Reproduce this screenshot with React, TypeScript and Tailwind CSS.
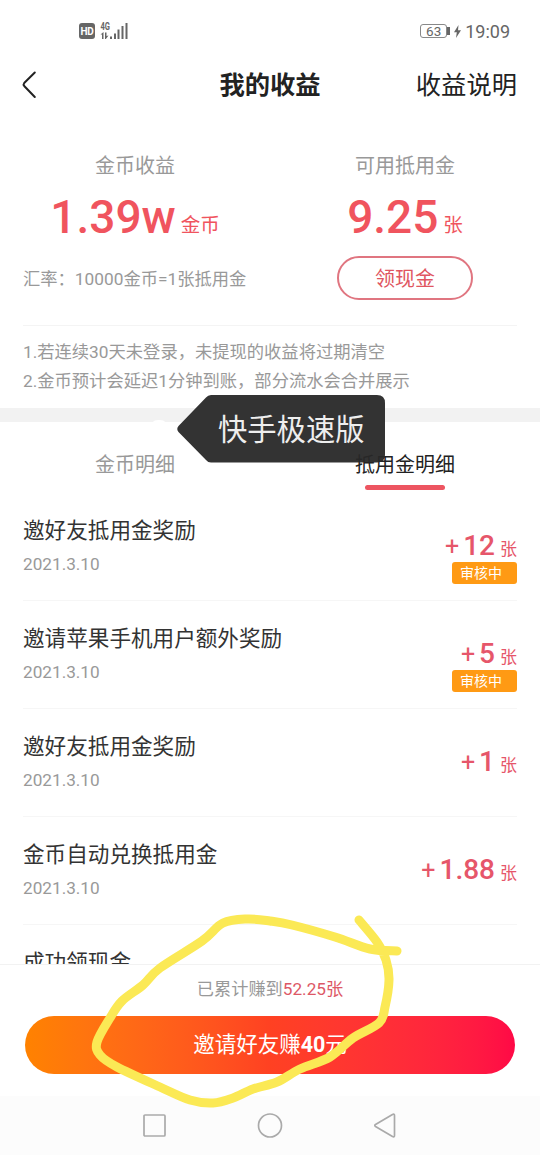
interface RewardRecord {
  title: string;
  date: string;
  amount: string;
  pending?: boolean;
}

const records: RewardRecord[] = [
  { title: "邀好友抵用金奖励", date: "2021.3.10", amount: "12", pending: true },
  { title: "邀请苹果手机用户额外奖励", date: "2021.3.10", amount: "5", pending: true },
  { title: "邀好友抵用金奖励", date: "2021.3.10", amount: "1" },
  { title: "金币自动兑换抵用金", date: "2021.3.10", amount: "1.88" },
];

const markerPoints = [
  [397, 951], [370, 949], [335, 937], [292, 925], [270, 921], [247, 919], [223, 923],
  [202, 941], [160, 968], [143, 985], [122, 1001], [110, 1018], [97, 1042], [100, 1055],
  [117, 1067], [160, 1087], [190, 1100], [213, 1103], [233, 1098], [253, 1089],
  [277, 1082], [300, 1069], [330, 1057], [353, 1038], [379, 1023], [385, 1007],
  [389, 980], [386, 960], [377, 942], [359, 920],
];

// Smooth curve through every point of the stroke
function smoothPath(points: number[][]) {
  let d = `M${points[0][0]} ${points[0][1]}`;
  for (let i = 0; i < points.length - 1; i++) {
    const p0 = points[i - 1] ?? points[i];
    const p1 = points[i];
    const p2 = points[i + 1];
    const p3 = points[i + 2] ?? p2;
    d += `C${p1[0] + (p2[0] - p0[0]) / 6} ${p1[1] + (p2[1] - p0[1]) / 6} ${p2[0] - (p3[0] - p1[0]) / 6} ${p2[1] - (p3[1] - p1[1]) / 6} ${p2[0]} ${p2[1]}`;
  }
  return d;
}

function StatusBar() {
  return (
    <div className="flex h-[60px] items-center justify-between pl-[79px] pr-[30px] pt-0.5 text-[#666]">
      <div className="flex items-center gap-[5px]">
        <span className="flex h-4 w-4 items-center justify-center rounded-[3px] bg-[#666] text-[10px] font-bold tracking-tight text-white">
          HD
        </span>
        <svg width="28" height="18" viewBox="0 0 28 18" fill="currentColor">
          <text x="0.5" y="8" fontSize="10" fontWeight="700" textLength="9.5" lengthAdjust="spacingAndGlyphs">
            4G
          </text>
          <path d="M0.500 12.500L3.500 10v7H2v-4.500zM5 10.500h1.500v3.500l2-.5-2.600 3.500H5z" />
          <path d="M10 14.500h2V17h-2zM14 11.500h2V17h-2zM17.500 7.500h2V17h-2zM21.500 4h2v13h-2zM25.500 1h2v16h-2z" />
        </svg>
      </div>
      <div className="flex items-center">
        <span className="flex h-[14px] w-[27px] items-center justify-center rounded-[3px] border border-[#888] text-[13.500px]">
          63
        </span>
        <span className="h-2 w-[3px] bg-[#666]" />
        <svg className="ml-1" width="7" height="13" viewBox="0 0 7 13" fill="currentColor">
          <path d="M4.500 0L0 7.300h2.800L2 13l5-7.800H4z" />
        </svg>
        <span className="ml-1 text-[18px]">19:09</span>
      </div>
    </div>
  );
}

function Header() {
  return (
    <header className="grid h-[50px] grid-cols-3 items-center pl-[23px] pr-[23px] pt-0.5 text-[25.300px] text-[#222]">
      <svg className="-ml-[3px] -mt-0.5" width="18" height="30" viewBox="0 0 18 30" fill="none" stroke="currentColor" strokeWidth="2" strokeLinecap="round" strokeLinejoin="round">
        <path d="M14.800 2.500L4.200 13q-1.200 1.500 0 3L14.800 27" />
      </svg>
      <h1 className="whitespace-nowrap text-center font-bold">我的收益</h1>
      <span className="whitespace-nowrap text-right">收益说明</span>
    </header>
  );
}

function Balances() {
  return (
    <section className="grid h-[215px] grid-cols-2 pt-[41px]">
      <div className="flex flex-col">
        <span className="text-center text-[20px] leading-[30px] text-[#999]">金币收益</span>
        <p className="mt-[10px] flex h-[52px] items-baseline justify-center gap-[5px] text-[#f0545e]">
          <span className="text-[46px] font-medium leading-[52px]">1.39w</span>
          <span className="relative -top-px text-[19.500px]">金币</span>
        </p>
        <span className="mt-[24px] pl-[23px] text-[17.300px] leading-[24px] text-[#999]">
          汇率：10000金币=1张抵用金
        </span>
      </div>
      <div className="flex flex-col items-center">
        <span className="text-[20px] leading-[30px] text-[#999]">可用抵用金</span>
        <p className="mt-[10px] flex h-[52px] items-baseline gap-[5px] text-[#f0545e]">
          <span className="text-[46px] font-medium leading-[52px]">9.25</span>
          <span className="relative -top-px text-[19.500px]">张</span>
        </p>
        <button className="mt-[13px] h-[44px] w-[136px] rounded-full border-2 border-[#e07580] pt-0.5 text-[20px] text-[#e05560]">
          领现金
        </button>
      </div>
    </section>
  );
}

function RecordRow({ title, date, amount, pending }: RewardRecord) {
  return (
    <li className="flex h-[108px] justify-between border-b border-[#f6f6f6]">
      <div className="pt-[22px]">
        <p className="text-[21.600px] leading-[32px] text-[#333]">{title}</p>
        <p className="mt-[5px] text-[17.200px] leading-[24px] text-[#999]">{date}</p>
      </div>
      <div className="flex flex-col items-end pt-[37px]">
        <p className="flex h-[32px] items-baseline text-[#e6566a]">
          <span className="mr-1 text-[25px] leading-[32px]">+</span>
          <span className="mr-[5px] text-[28px] font-medium leading-[32px]">{amount}</span>
          <span className="text-[17px]">张</span>
        </p>
        {pending && (
          <span className="h-[22px] w-[65px] rounded-[3px] bg-[#ff9a14] pl-2 text-[14px] leading-[22px] text-white">
            审核中
          </span>
        )}
      </div>
    </li>
  );
}

function BottomBar() {
  return (
    <footer className="h-[132px] border-t border-[#f2f2f2] bg-white">
      <p className="pt-[11px] text-center text-[17.200px] leading-[26px] text-[#999]">
        已累计赚到<span className="text-[#dd5866]">52.25张</span>
      </p>
      <button className="mx-auto mt-[14px] block h-[58px] w-[490px] rounded-full bg-linear-to-r from-[#ff8200] via-[#ff4122] to-[#ff0846] text-[21.500px] text-white">
        邀请好友赚<b className="font-bold">40</b>元
      </button>
    </footer>
  );
}

function NavBar() {
  return (
    <nav className="flex h-[59px] items-center justify-center gap-[91px] bg-[#fcfcfc] text-[#aaa]">
      <svg width="24" height="26" fill="none" stroke="currentColor" strokeWidth="1.700">
        <rect x="2" y="2" width="21" height="21" rx="1" />
      </svg>
      <svg width="26" height="26" fill="none" stroke="currentColor" strokeWidth="1.700">
        <circle cx="13" cy="12.500" r="11.500" />
      </svg>
      <svg width="24" height="26" fill="none" stroke="currentColor" strokeWidth="1.700" strokeLinejoin="round">
        <path d="M1.500 11.500L18.500 1.500Q20.500 0.500 20.500 2.500V22.500Q20.500 24.500 18.500 23.500L1.500 13.500Q0 12.500 1.500 11.500Z" />
      </svg>
    </nav>
  );
}

export default function App() {
  return (
    <div className="relative flex h-[1155px] w-[540px] flex-col overflow-hidden bg-white font-[Roboto,'Noto_Sans_CJK_SC',sans-serif]">
      <StatusBar />
      <Header />
      <Balances />
      <div className="mx-[23px] h-[83px] border-t border-[#f4f4f4] pt-3 text-[17.300px] leading-[28.500px] text-[#999]">
        <p>1.若连续30天未登录，未提现的收益将过期清空</p>
        <p>2.金币预计会延迟1分钟到账，部分流水会合并展示</p>
      </div>
      <div className="h-[14px] shrink-0 bg-[#f2f2f2]" />
      <div className="grid h-[71px] shrink-0 grid-cols-2 pt-[28px] text-center text-[20px] leading-[30px]">
        <span className="text-[#999]">金币明细</span>
        <div className="flex flex-col items-center text-[#222]">
          <span>抵用金明细</span>
          <span className="mt-[5px] h-[5px] w-[80px] rounded-full bg-[#ed5561]" />
        </div>
      </div>
      <ul className="mx-[23px] min-h-0 flex-1 overflow-hidden">
        {records.map((record, i) => (
          <RecordRow key={i} {...record} />
        ))}
        <li className="pt-[22px] text-[21.600px] leading-[32px] text-[#333]">成功领现金</li>
      </ul>
      <BottomBar />
      <NavBar />

      {/* floating app label */}
      <div className="absolute left-[150px] top-[420px] h-4 w-[18px] rounded-full bg-white" />
      <div className="absolute left-[177px] top-[395px] flex h-[68px] w-[208px] items-center pl-[41px] pt-[3px] text-[29.300px] text-[#eee]">
        <svg className="absolute inset-0" width="208" height="68" viewBox="0 0 208 68">
          <path
            d="M34 0H200Q208 0 208 8V60Q208 67.500 200 67.500H34Q31 67.500 29 65L1.500 37Q-1 34 1.500 31L29 2.500Q31 0 34 0Z"
            fill="#282828"
            fillOpacity="0.95"
          />
        </svg>
        <span className="relative whitespace-nowrap">快手极速版</span>
      </div>

      {/* hand-drawn marker */}
      <svg className="pointer-events-none absolute inset-0" width="540" height="1155" fill="none">
        <path d={smoothPath(markerPoints)} stroke="#fbe955" strokeWidth="9" strokeLinecap="round" strokeLinejoin="round" />
      </svg>
    </div>
  );
}
